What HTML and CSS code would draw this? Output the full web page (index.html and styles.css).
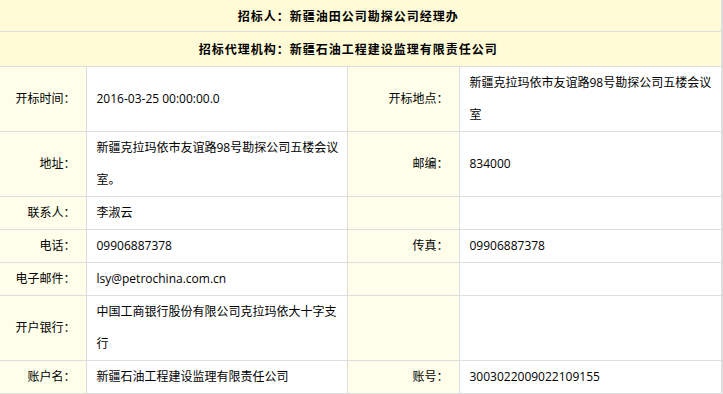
FILE: index.html
```html
<!DOCTYPE html>
<html lang="zh-CN">
<head>
<meta charset="utf-8">
<title>招标信息</title>
<link rel="stylesheet" href="styles.css">
</head>
<body>
<div class="frame">
<table class="info">
  <colgroup>
    <col class="c1"><col class="c2"><col class="c3"><col class="c4">
  </colgroup>
  <tr class="head first"><th colspan="4">招标人：新疆油田公司勘探公司经理办</th></tr>
  <tr class="head second"><th colspan="4">招标代理机构：新疆石油工程建设监理有限责任公司</th></tr>
  <tr>
    <td class="lab">开标时间：</td><td class="val">2016-03-25 00:00:00.0</td>
    <td class="lab">开标地点：</td><td class="val">新疆克拉玛依市友谊路98号勘探公司五楼会议室</td>
  </tr>
  <tr>
    <td class="lab">地址：</td><td class="val">新疆克拉玛依市友谊路98号勘探公司五楼会议室。</td>
    <td class="lab">邮编：</td><td class="val">834000</td>
  </tr>
  <tr>
    <td class="lab">联系人：</td><td class="val">李淑云</td>
    <td class="lab"></td><td class="val"></td>
  </tr>
  <tr>
    <td class="lab">电话：</td><td class="val">09906887378</td>
    <td class="lab">传真：</td><td class="val">09906887378</td>
  </tr>
  <tr>
    <td class="lab">电子邮件：</td><td class="val">lsy@petrochina.com.cn</td>
    <td class="lab"></td><td class="val"></td>
  </tr>
  <tr>
    <td class="lab">开户银行：</td><td class="val">中国工商银行股份有限公司克拉玛依大十字支行</td>
    <td class="lab"></td><td class="val"></td>
  </tr>
  <tr>
    <td class="lab">账户名：</td><td class="val">新疆石油工程建设监理有限责任公司</td>
    <td class="lab">账号：</td><td class="val">3003022009022109155</td>
  </tr>
</table>
</div>
</body>
</html>
```
FILE: styles.css
```css
html, body {
  margin: 0;
  padding: 0;
  background: #ffffff;
}

body {
  font-family: "Open Sans", "Noto Sans CJK SC", sans-serif;
  font-size: 12px;
  color: #000000;
}

.frame {
  width: 721px;
  border-right: 2px solid #dedede;
}

.info {
  width: 721px;
  table-layout: fixed;
  border-collapse: collapse;
}

.c1 { width: 86px; }
.c2 { width: 261px; }
.c3 { width: 112px; }
.c4 { width: 262px; }

.info th,
.info td {
  border: 1px solid #dddddd;
  padding: 0;
  vertical-align: middle;
}

.info tr > :first-child {
  border-left: 0;
}

.head th {
  background: #fffbd7;
  font-weight: bold;
  text-align: center;
  letter-spacing: 1px;
  padding-right: 24px;
  font-family: "Noto Sans CJK SC", sans-serif;
}

.head.first th {
  border-top: 0;
  height: 31px;
  line-height: 31px;
}

.head.second th {
  height: 34px;
  line-height: 34px;
}

.lab {
  background: #fefeea;
  text-align: right;
  padding-right: 10px !important;
  line-height: 32px;
  height: 32px;
}

.val {
  background: #ffffff;
  text-align: left;
  padding-left: 10px !important;
  padding-right: 6px !important;
  line-height: 32px;
  height: 32px;
}
```
